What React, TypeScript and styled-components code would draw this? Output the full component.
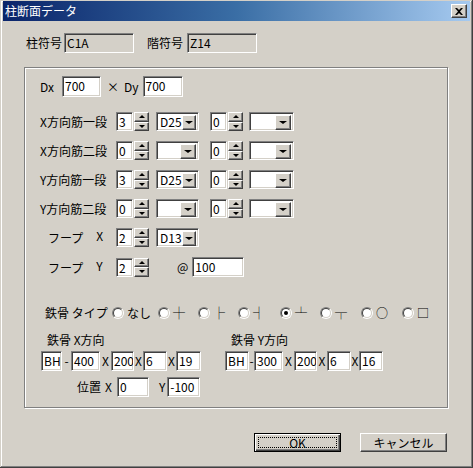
import React from "react";
import styled, { createGlobalStyle, css } from "styled-components";

const Global = createGlobalStyle`
  html, body { margin: 0; padding: 0; background: #d4d0c8; }
  body { font-family: "Noto Sans CJK JP", "Noto Sans", sans-serif; font-size: 12px; color: #000; }
  * { box-sizing: border-box; }
`;

const sunken = css`
  border: 1px solid;
  border-color: #808080 #ffffff #ffffff #808080;
  box-shadow: inset 1px 1px #404040, inset -1px -1px #d4d0c8;
`;

const raised = css`
  border: 1px solid;
  border-color: #ffffff #404040 #404040 #ffffff;
  box-shadow: inset -1px -1px #808080, inset 1px 1px #d4d0c8;
`;

const Window = styled.div`
  width: 473px;
  height: 468px;
  padding: 1px 3px 3px 3px;
  background: #d4d0c8;
  box-shadow: inset -1px -1px #404040, inset 1px 1px #d4d0c8, inset -2px -2px #808080, inset 2px 2px #ffffff;
  display: flex;
  flex-direction: column;
`;

const TitleBar = styled.div`
  height: 20px;
  display: flex;
  align-items: center;
  padding: 0 3px 0 2px;
  background: linear-gradient(to right, #0a246a 0%, #3a6ea5 50%, #a6caf0 100%);
  color: #fff;
  font-size: 12px;
  line-height: 20px;
`;

const CloseBtn = styled.div`
  ${raised};
  margin-left: auto;
  width: 16px;
  height: 14px;
  display: flex;
  align-items: center;
  justify-content: center;
  background: #d4d0c8;
`;

const Body = styled.div`
  flex: 1;
  display: flex;
  flex-direction: column;
  padding-top: 12px;
`;

const TopRow = styled.div`
  display: flex;
  align-items: center;
  padding-left: 23px;
  height: 20px;
`;

const Label = styled.span<{ $ml?: number; $w?: number }>`
  margin-left: ${(p) => p.$ml ?? 0}px;
  ${(p) => (p.$w ? `width: ${p.$w}px;` : "")}
  white-space: nowrap;
  line-height: 14px;
  flex-shrink: 0;
`;

const Field = styled.div<{ $w: number; $h?: number; $ml?: number; $disabled?: boolean }>`
  ${sunken};
  width: ${(p) => p.$w}px;
  height: ${(p) => p.$h ?? 20}px;
  margin-left: ${(p) => p.$ml ?? 0}px;
  background: ${(p) => (p.$disabled ? "#d4d0c8" : "#ffffff")};
  padding: 2px 0 0 2px;
  line-height: 14px;
  white-space: nowrap;
  overflow: hidden;
  flex-shrink: 0;
`;

const Group = styled.div`
  margin: 14px 0 0 21px;
  width: 424px;
  height: 341px;
  border: 1px solid #808080;
  box-shadow: inset 1px 1px #ffffff, 1px 1px #ffffff;
  padding-left: 15px;
  display: flex;
  flex-direction: column;
`;

const Row = styled.div<{ $mt: number; $h?: number; $pl?: number }>`
  display: flex;
  align-items: center;
  margin-top: ${(p) => p.$mt}px;
  height: ${(p) => p.$h ?? 19}px;
  padding-left: ${(p) => p.$pl ?? 0}px;
`;

const SpinWrap = styled.div<{ $ml?: number }>`
  display: flex;
  margin-left: ${(p) => p.$ml ?? 0}px;
  height: 19px;
  flex-shrink: 0;
`;

const SpinButtons = styled.div`
  width: 15px;
  height: 19px;
  margin-left: 1px;
  display: flex;
  flex-direction: column;
`;

const SpinBtn = styled.div`
  ${raised};
  flex: 1;
  background: #d4d0c8;
  display: flex;
  align-items: center;
  justify-content: center;
`;

const Tri = styled.span<{ $up?: boolean; $size?: number }>`
  width: 0;
  height: 0;
  border-left: ${(p) => p.$size ?? 3}px solid transparent;
  border-right: ${(p) => p.$size ?? 3}px solid transparent;
  ${(p) =>
    p.$up
      ? `border-bottom: ${Math.ceil((p.$size ?? 3) * 0.67)}px solid #000;`
      : `border-top: ${Math.ceil((p.$size ?? 3) * 0.67)}px solid #000;`}
`;

const ComboWrap = styled.div<{ $w: number; $ml?: number }>`
  ${sunken};
  width: ${(p) => p.$w}px;
  height: 19px;
  margin-left: ${(p) => p.$ml ?? 0}px;
  background: #fff;
  display: flex;
  padding: 2px;
  flex-shrink: 0;
`;

const ComboText = styled.div`
  flex: 1;
  line-height: 13px;
  padding-left: 1px;
`;

const ComboArrow = styled.div`
  ${raised};
  width: 16px;
  height: 15px;
  background: #d4d0c8;
  display: flex;
  align-items: center;
  justify-content: center;
`;

const RowLabel = styled.span<{ $w: number; $pl?: number }>`
  width: ${(p) => p.$w}px;
  padding-left: ${(p) => p.$pl ?? 0}px;
  white-space: nowrap;
  flex-shrink: 0;
  display: flex;
`;

const RadioItem = styled.div<{ $w?: number }>`
  display: flex;
  align-items: center;
  ${(p) => (p.$w ? `width: ${p.$w}px;` : "")}
  flex-shrink: 0;
`;

const RadioOuter = styled.span`
  width: 12px;
  height: 12px;
  border-radius: 50%;
  border: 1px solid;
  border-color: #808080 #ffffff #ffffff #808080;
  display: flex;
`;

const RadioInner = styled.span`
  flex: 1;
  border-radius: 50%;
  border: 1px solid;
  border-color: #404040 #d4d0c8 #d4d0c8 #404040;
  background: #fff;
  display: flex;
  align-items: center;
  justify-content: center;
`;

const Dot = styled.span`
  width: 4px;
  height: 4px;
  border-radius: 50%;
  background: #000;
`;

const RadioText = styled.span`
  margin-left: 3px;
  line-height: 14px;
`;

const SteelCols = styled.div`
  display: flex;
  margin-top: 13px;
`;

const SteelCol = styled.div<{ $ml?: number }>`
  display: flex;
  flex-direction: column;
  margin-left: ${(p) => p.$ml ?? 0}px;
`;

const SteelLabel = styled.div`
  padding-left: 6px;
  line-height: 14px;
  height: 14px;
`;

const Sep = styled.span<{ $w: number }>`
  width: ${(p) => p.$w}px;
  text-align: center;
  flex-shrink: 0;
  line-height: 14px;
`;

const ButtonRow = styled.div`
  display: flex;
  justify-content: flex-end;
  gap: 19px;
  margin-top: 25px;
  padding-right: 23px;
`;

const Button = styled.div<{ $default?: boolean }>`
  width: 87px;
  height: 19px;
  background: #d4d0c8;
  display: flex;
  align-items: center;
  justify-content: center;
  line-height: 14px;
  position: relative;
  ${(p) =>
    p.$default
      ? css`
          border: 1px solid #000;
          box-shadow: inset 1px 1px #fff, inset -1px -1px #404040, inset -2px -2px #808080;
        `
      : raised}
`;

const Focus = styled.span`
  position: absolute;
  inset: 3px;
  border: 1px dotted #000;
`;

function Spin({ v, ml }: { v: string; ml?: number }) {
  return (
    <SpinWrap $ml={ml}>
      <Field $w={17} $h={19}>{v}</Field>
      <SpinButtons>
        <SpinBtn><Tri $up $size={3} /></SpinBtn>
        <SpinBtn><Tri $size={3} /></SpinBtn>
      </SpinButtons>
    </SpinWrap>
  );
}

function Combo({ v, w, ml }: { v: string; w: number; ml?: number }) {
  return (
    <ComboWrap $w={w} $ml={ml}>
      <ComboText>{v}</ComboText>
      <ComboArrow><Tri $size={4} /></ComboArrow>
    </ComboWrap>
  );
}

function Radio({ text, checked, w }: { text: string; checked?: boolean; w?: number }) {
  return (
    <RadioItem $w={w}>
      <RadioOuter>
        <RadioInner>{checked && <Dot />}</RadioInner>
      </RadioOuter>
      <RadioText>{text}</RadioText>
    </RadioItem>
  );
}

function RebarRow({ label, mt, a, b, c, d }: { label: string; mt: number; a: string; b: string; c: string; d: string }) {
  return (
    <Row $mt={mt}>
      <RowLabel $w={76}>{label}</RowLabel>
      <Spin v={a} />
      <Combo v={b} w={43} ml={7} />
      <Spin v={c} ml={11} />
      <Combo v={d} w={45} ml={6} />
    </Row>
  );
}

export default function App() {
  return (
    <>
      <Global />
      <Window>
        <TitleBar>
          <span>柱断面データ</span>
          <CloseBtn>
            <svg width="8" height="7" viewBox="0 0 8 7">
              <path d="M0 0h2l2 2 2-2h2L5 3.5 8 7H6L4 5 2 7H0l3-3.5z" fill="#000" />
            </svg>
          </CloseBtn>
        </TitleBar>
        <Body>
          <TopRow>
            <Label>柱符号</Label>
            <Field $w={70} $ml={2} $disabled>C1A</Field>
            <Label $ml={13}>階符号</Label>
            <Field $w={70} $ml={4} $disabled>Z14</Field>
          </TopRow>
          <Group>
            <Row $mt={8} $h={21}>
              <Label $w={22}>Dx</Label>
              <Field $w={39} $h={21}>700</Field>
              <Label $ml={6}>×</Label>
              <Label $ml={5}>Dy</Label>
              <Field $w={40} $h={21} $ml={4}>700</Field>
            </Row>
            <RebarRow label="X方向筋一段" mt={15} a="3" b="D25" c="0" d="" />
            <RebarRow label="X方向筋二段" mt={10} a="0" b="" c="0" d="" />
            <RebarRow label="Y方向筋一段" mt={10} a="3" b="D25" c="0" d="" />
            <RebarRow label="Y方向筋二段" mt={10} a="0" b="" c="0" d="" />
            <Row $mt={10}>
              <RowLabel $w={76} $pl={8}>
                フープ<Label $ml={13}>X</Label>
              </RowLabel>
              <Spin v="2" />
              <Combo v="D13" w={43} ml={7} />
            </Row>
            <Row $mt={10} $h={20}>
              <RowLabel $w={76} $pl={8}>
                フープ<Label $ml={13}>Y</Label>
              </RowLabel>
              <Spin v="2" />
              <Label $ml={28}>@</Label>
              <Field $w={52} $ml={4}>100</Field>
            </Row>
            <Row $mt={29} $h={14} $pl={5}>
              <Label $w={67}>鉄骨 タイプ</Label>
              <Radio text="なし" w={46} />
              <Radio text="┼" w={40} />
              <Radio text="├" w={40} />
              <Radio text="┤" w={42} />
              <Radio text="┴" checked w={40} />
              <Radio text="┬" w={41} />
              <Radio text="○" w={41} />
              <Radio text="□" />
            </Row>
            <SteelCols>
              <SteelCol $ml={1}>
                <SteelLabel>鉄骨 X方向</SteelLabel>
                <Row $mt={4} $h={20}>
                  <Field $w={21}>BH</Field>
                  <Sep $w={9}>-</Sep>
                  <Field $w={29}>400</Field>
                  <Sep $w={11}>X</Sep>
                  <Field $w={23}>200</Field>
                  <Sep $w={9}>X</Sep>
                  <Field $w={24}>6</Field>
                  <Sep $w={9}>X</Sep>
                  <Field $w={25}>19</Field>
                </Row>
              </SteelCol>
              <SteelCol $ml={24}>
                <SteelLabel>鉄骨 Y方向</SteelLabel>
                <Row $mt={4} $h={20}>
                  <Field $w={24}>BH</Field>
                  <Sep $w={5}>-</Sep>
                  <Field $w={29}>300</Field>
                  <Sep $w={11}>X</Sep>
                  <Field $w={23}>200</Field>
                  <Sep $w={10}>X</Sep>
                  <Field $w={24}>6</Field>
                  <Sep $w={8}>X</Sep>
                  <Field $w={24}>16</Field>
                </Row>
              </SteelCol>
            </SteelCols>
            <Row $mt={6} $h={20} $pl={37}>
              <Label>位置</Label>
              <Label $ml={4}>X</Label>
              <Field $w={32} $ml={5}>0</Field>
              <Label $ml={10}>Y</Label>
              <Field $w={33} $ml={2}>-100</Field>
            </Row>
          </Group>
          <ButtonRow>
            <Button $default>
              OK
              <Focus />
            </Button>
            <Button>キャンセル</Button>
          </ButtonRow>
        </Body>
      </Window>
    </>
  );
}
